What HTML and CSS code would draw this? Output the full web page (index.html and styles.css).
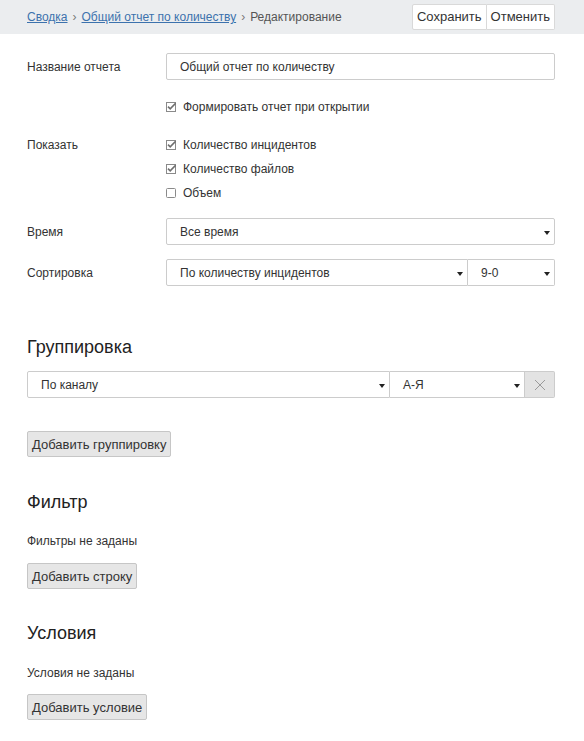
FILE: index.html
```html
<!DOCTYPE html>
<html lang="ru">
<head>
<meta charset="utf-8">
<title>Редактирование</title>
<link rel="stylesheet" href="styles.css">
</head>
<body>
<header class="topbar">
  <nav class="crumbs">
    <a href="#" class="crumb-link">Сводка</a>
    <span class="sep">›</span>
    <a href="#" class="crumb-link">Общий отчет по количеству</a>
    <span class="sep">›</span>
    <span class="crumb-current">Редактирование</span>
  </nav>
  <div class="btn-group">
    <button class="tbtn">Сохранить</button>
    <button class="tbtn">Отменить</button>
  </div>
</header>

<main class="content">
  <div class="row row-name">
    <div class="label">Название отчета</div>
    <div class="control"><div class="input">Общий отчет по количеству</div></div>
  </div>

  <div class="row row-auto">
    <div class="label"></div>
    <div class="control">
      <div class="check"><svg class="cb" viewBox="0 0 10 10"><rect x="0.5" y="0.5" width="9" height="9" fill="none" stroke="#8a8a8a"/><path d="M2 4.6 L4.2 6.8 L9.6 1.2" fill="none" stroke="#6f6f6f" stroke-width="1.6"/></svg>Формировать отчет при открытии</div>
    </div>
  </div>

  <div class="row row-show">
    <div class="label label-top">Показать</div>
    <div class="control">
      <div class="check"><svg class="cb" viewBox="0 0 10 10"><rect x="0.5" y="0.5" width="9" height="9" fill="none" stroke="#8a8a8a"/><path d="M2 4.6 L4.2 6.8 L9.6 1.2" fill="none" stroke="#6f6f6f" stroke-width="1.6"/></svg>Количество инцидентов</div>
      <div class="check"><svg class="cb" viewBox="0 0 10 10"><rect x="0.5" y="0.5" width="9" height="9" fill="none" stroke="#8a8a8a"/><path d="M2 4.6 L4.2 6.8 L9.6 1.2" fill="none" stroke="#6f6f6f" stroke-width="1.6"/></svg>Количество файлов</div>
      <div class="check"><svg class="cb" viewBox="0 0 10 10"><rect x="0.5" y="0.5" width="9" height="9" rx="1" fill="none" stroke="#8a8a8a"/></svg>Объем</div>
    </div>
  </div>

  <div class="row row-time">
    <div class="label">Время</div>
    <div class="control">
      <div class="select-group">
        <div class="select grow">Все время<span class="caret"></span></div>
      </div>
    </div>
  </div>

  <div class="row row-sort">
    <div class="label">Сортировка</div>
    <div class="control">
      <div class="select-group">
        <div class="select grow">По количеству инцидентов<span class="caret"></span></div>
        <div class="select s-order">9-0<span class="caret"></span></div>
      </div>
    </div>
  </div>

  <section class="section sec-group">
    <h2 class="heading">Группировка</h2>
    <div class="select-group">
      <div class="select grow">По каналу<span class="caret"></span></div>
      <div class="select s-az">А-Я<span class="caret"></span></div>
      <div class="remove"><svg viewBox="0 0 12 12" width="12" height="12"><path d="M1 1 L11 11 M11 1 L1 11" stroke="#9a9a9a" stroke-width="1"/></svg></div>
    </div>
    <button class="btn btn-add-group">Добавить группировку</button>
  </section>

  <section class="section sec-filter">
    <h2 class="heading">Фильтр</h2>
    <p class="empty">Фильтры не заданы</p>
    <button class="btn btn-filter">Добавить строку</button>
  </section>

  <section class="section sec-cond">
    <h2 class="heading">Условия</h2>
    <p class="empty empty-cond">Условия не заданы</p>
    <button class="btn">Добавить условие</button>
  </section>
</main>
</body>
</html>
```

FILE: styles.css
```css
* { box-sizing: border-box; }
html, body { margin: 0; padding: 0; background: #fff; }
body {
  font-family: "Liberation Sans", Arial, sans-serif;
  font-size: 12px;
  color: #333;
}

.topbar {
  height: 34px;
  background: #ebedef;
  display: flex;
  align-items: center;
  justify-content: space-between;
  padding: 0 29px 0 27px;
}
.crumbs { display: flex; align-items: center; gap: 4px; font-size: 12px; }
.crumb-link { color: #3c72ad; text-decoration: underline; }
.sep { color: #777; font-size: 12px; padding: 0 1px; }
.crumb-current { color: #555; }

.btn-group { display: flex; margin-top: -1px; }
.tbtn {
  height: 26px;
  background: #fff;
  border: 1px solid #d9d9d9;
  font-family: inherit;
  font-size: 13px;
  color: #333;
  padding: 0 4px;
  margin: 0;
  border-radius: 0;
}
.tbtn + .tbtn { border-left: none; }
.tbtn:first-child { border-radius: 2px 0 0 2px; }
.tbtn:last-child { border-radius: 0 2px 2px 0; }

.content { padding: 0 29px 0 27px; }

.row { display: grid; grid-template-columns: 139px 1fr; align-items: center; }
.label { color: #333; }
.row-name { margin-top: 19px; }
.row-auto { margin-top: 15px; }
.row-show { margin-top: 14px; align-items: start; }
.label-top { line-height: 24px; }
.row-time { margin-top: 13px; }
.row-sort { margin-top: 14px; }

.input {
  height: 27px;
  border: 1px solid #ccc;
  border-radius: 2px;
  padding: 0 13px;
  display: flex;
  align-items: center;
  color: #333;
}

.check {
  height: 24px;
  display: flex;
  align-items: center;
  gap: 7px;
  color: #333;
}
.cb { width: 10px; height: 10px; flex: none; }

.select-group { display: flex; height: 27px; }
.select {
  position: relative;
  border: 1px solid #ccc;
  height: 27px;
  display: flex;
  align-items: center;
  padding: 0 13px;
  color: #333;
}
.select + .select, .select + .remove { border-left: none; }
.select:first-child { border-radius: 2px 0 0 2px; }
.select-group > :last-child { border-radius: 0 2px 2px 0; }
.select-group > :only-child { border-radius: 2px; }
.grow { flex: 1; }
.s-order { width: 87px; }
.s-az { width: 135px; }
.caret {
  position: absolute;
  right: 4px;
  top: 12px;
  width: 0; height: 0;
  border-left: 3.5px solid transparent;
  border-right: 3.5px solid transparent;
  border-top: 4px solid #222;
}
.remove {
  width: 30px;
  height: 27px;
  background: #e3e3e3;
  border: 1px solid #ccc;
  display: flex;
  align-items: center;
  justify-content: center;
}

.heading {
  font-size: 18px;
  font-weight: normal;
  line-height: 20px;
  margin: 0;
  color: #222;
}
.sec-group { margin-top: 51px; }
.sec-group .heading { margin-bottom: 14px; }
.btn-add-group { margin-top: 33px; }
.sec-filter { margin-top: 35px; }
.sec-cond { margin-top: 34px; }
.sec-filter .heading, .sec-cond .heading { margin-bottom: 0; }
.empty { margin: 21px 0 0; line-height: 16px; }
.empty-cond { margin-top: 22px; }
.empty + .btn { margin-top: 13px; }
.empty + .btn-filter { margin-top: 14px; }

.btn {
  display: block;
  height: 26px;
  background: #e6e6e6;
  border: 1px solid #c6c6c6;
  border-radius: 2px;
  font-family: inherit;
  font-size: 13px;
  color: #333;
  padding: 0 4px;
}
```
